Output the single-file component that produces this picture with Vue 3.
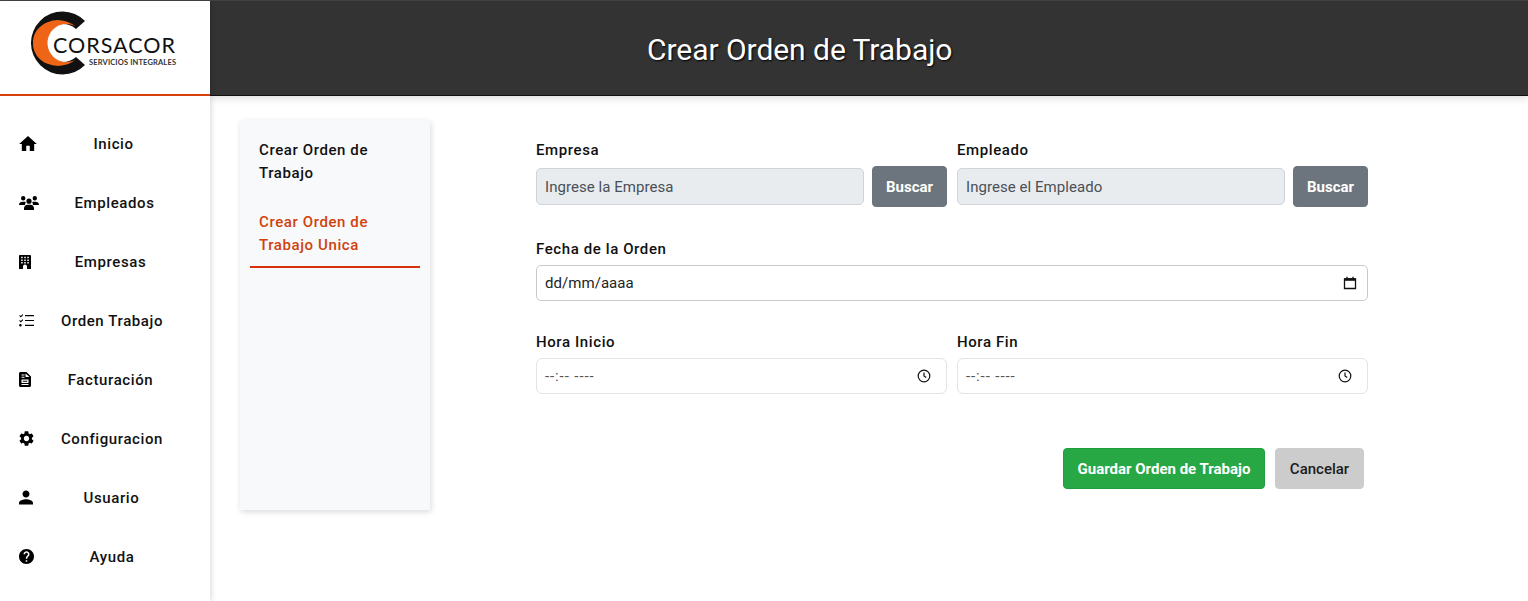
<template>
  <div class="page">
    <aside class="sidebar">
      <div class="brand">
        <svg class="logo" viewBox="0 0 210 95" width="210" height="95">
          <path d="M85 21 A31.500 31.500 0 1 0 85 65 L76 57 A19 19 0 1 1 76 29 Z" fill="#111" />
          <path d="M75 26 A25 22 0 0 0 33 43 A25 22 0 0 0 75 60 A19 19 0 0 1 47.500 43 A19 19 0 0 1 75 26 Z" fill="#ee6518" />
          <text x="53" y="53" class="logo-name" textLength="122">CORSACOR</text>
          <text x="89" y="64.500" class="logo-sub" textLength="87">SERVICIOS INTEGRALES</text>
        </svg>
      </div>
      <nav class="main-nav">
        <a v-for="item in navItems" :key="item.label" class="nav-item">
          <svg class="nav-icon" :width="item.w" :height="item.h" :viewBox="item.box" fill="#000">
            <path :d="item.d" fill-rule="evenodd" />
          </svg>
          <span>{{ item.label }}</span>
        </a>
      </nav>
    </aside>

    <div class="main">
      <header class="topbar">
        <h1>Crear Orden de Trabajo</h1>
      </header>
      <div class="content">
        <div class="subnav">
          <a class="sub-link">Crear Orden de Trabajo</a>
          <a class="sub-link active">Crear Orden de Trabajo Unica</a>
        </div>

        <form class="form" @submit.prevent>
          <div class="row search-row">
            <div class="field">
              <label>Empresa</label>
              <div class="with-btn">
                <input class="ctl disabled" type="text" value="Ingrese la Empresa" readonly />
                <button class="btn-search" type="button">Buscar</button>
              </div>
            </div>
            <div class="field">
              <label>Empleado</label>
              <div class="with-btn">
                <input class="ctl disabled" type="text" value="Ingrese el Empleado" readonly />
                <button class="btn-search" type="button">Buscar</button>
              </div>
            </div>
          </div>

          <div class="field date-field">
            <label>Fecha de la Orden</label>
            <div class="ctl picker strong">
              <span>dd/mm/aaaa</span>
              <svg width="14" height="14" viewBox="0 0 14 14" fill="none" stroke="#111">
                <path d="M1.500 3h11v9.500h-11z" stroke-width="1.300" />
                <path d="M1.500 3.500h11" stroke-width="2.600" />
                <path d="M4 .8v2M10 .8v2" stroke-width="1.300" />
              </svg>
            </div>
          </div>

          <div class="row time-row">
            <div class="field">
              <label>Hora Inicio</label>
              <div class="ctl picker time">
                <span>--:-- ----</span>
                <svg width="14" height="14" viewBox="0 0 14 14" fill="none" stroke="#111" stroke-width="1.200">
                  <circle cx="7" cy="7" r="5.800" />
                  <path d="M7 3.600V7l2.200 1.600" />
                </svg>
              </div>
            </div>
            <div class="field">
              <label>Hora Fin</label>
              <div class="ctl picker time">
                <span>--:-- ----</span>
                <svg width="14" height="14" viewBox="0 0 14 14" fill="none" stroke="#111" stroke-width="1.200">
                  <circle cx="7" cy="7" r="5.800" />
                  <path d="M7 3.600V7l2.200 1.600" />
                </svg>
              </div>
            </div>
          </div>

          <div class="actions">
            <button class="btn-save" type="button">Guardar Orden de Trabajo</button>
            <button class="btn-cancel" type="button">Cancelar</button>
          </div>
        </form>
      </div>
    </div>
  </div>
</template>

<script setup>
const navItems = [
  { label: 'Inicio', w: 18, h: 15, box: '2 3 20 17', d: 'M10 20v-6h4v6h5v-8h3L12 3 2 12h3v8z' },
  {
    label: 'Empleados', w: 20, h: 15, box: '0 0 20 15',
    d: 'M4.200 1a2.200 2.200 0 1 1 0 4.400 2.200 2.200 0 0 1 0-4.400zM15.800 1a2.200 2.200 0 1 1 0 4.400 2.200 2.200 0 0 1 0-4.400zM10 3.600a2.600 2.600 0 1 1 0 5.200 2.600 2.600 0 0 1 0-5.200zM0 10c0-2 1.600-3.200 3.400-3.200h2c.5 0 1 .1 1.400.4C6.200 8 6 8.900 6.100 10zM13.900 10c.1-1.100-.1-2-.7-2.800.4-.3.900-.4 1.400-.4h2c1.800 0 3.400 1.200 3.400 3.200zM5 15v-1.600C5 11.300 6.500 9.700 8.500 9.700h3c2 0 3.500 1.600 3.500 3.700V15z'
  },
  {
    label: 'Empresas', w: 12, h: 14, box: '0 0 12 14',
    d: 'M.8 0h10.400c.4 0 .8.4.8.8V14H8v-2.600a2 2 0 0 0-4 0V14H0V.8C0 .4.400 0 .8 0zM2.200 1.800v1.500h1.500V1.800zm3.050 0v1.500h1.500V1.800zM8.300 1.800v1.500h1.500V1.800zM2.200 4.400v1.500h1.500V4.400zm3.050 0v1.500h1.500V4.400zM8.300 4.400v1.500h1.500V4.400zM2.200 7v1.500h1.500V7zm3.050 0v1.500h1.500V7zM8.300 7v1.500h1.500V7z'
  },
  {
    label: 'Orden Trabajo', w: 15, h: 13, box: '0 0 15 13',
    d: 'M6 1h9v1.200H6zM6 5.900h9v1.200H6zM6 10.800h9V12H6zM.2 1.800l.7-.7.9.9L3.600.2l.7.7L1.800 3.500zM.2 6.800l.7-.7.900.9 1.800-1.800.7.7-2.500 2.600zM1.400 9.900a1.300 1.300 0 1 1 0 2.600 1.300 1.300 0 0 1 0-2.600z'
  },
  {
    label: 'Facturación', w: 12, h: 15, box: '0 0 12 15',
    d: 'M1.500 0H7.500L12 4.500v9c0 .8-.700 1.500-1.500 1.500h-9C.7 15 0 14.300 0 13.500v-12C0 .7.700 0 1.500 0zM2.500 2.500v1h3v-1zM2.500 4.800v1h3v-1zM6.500 1.500v3.500h4zM2.500 7.500v3.500h7V7.500zM3.800 8.700h4.400v1.100H3.800zM2.500 12v1h7v-1z'
  },
  {
    label: 'Configuracion', w: 15, h: 15, box: '2.500 2 19 20',
    d: 'M19.140 12.940c.04-.3.06-.61.06-.94 0-.32-.02-.64-.07-.94l2.030-1.580c.18-.14.23-.41.12-.61l-1.920-3.320c-.12-.22-.37-.29-.59-.22l-2.390.96c-.5-.38-1.030-.7-1.620-.94l-.36-2.540c-.04-.24-.24-.41-.48-.41h-3.840c-.24 0-.43.17-.47.41l-.36 2.540c-.59.24-1.130.57-1.620.94l-2.390-.96c-.22-.08-.47 0-.59.22L2.740 8.870c-.12.21-.08.47.12.61l2.030 1.580c-.05.3-.09.63-.09.94s.02.64.07.94l-2.030 1.580c-.18.14-.23.41-.12.61l1.920 3.320c.12.22.37.29.59.22l2.390-.96c.5.38 1.030.7 1.620.94l.36 2.540c.05.24.24.41.48.41h3.840c.24 0 .44-.17.47-.41l.36-2.540c.59-.24 1.130-.56 1.620-.94l2.390.96c.22.08.47 0 .59-.22l1.920-3.320c.12-.22.07-.47-.12-.61l-2.010-1.580zM12 15.600c-1.980 0-3.600-1.620-3.600-3.600s1.620-3.600 3.600-3.600 3.600 1.620 3.600 3.600-1.620 3.600-3.600 3.600z'
  },
  {
    label: 'Usuario', w: 14, h: 15, box: '4 4 16 16',
    d: 'M12 12c2.210 0 4-1.790 4-4s-1.790-4-4-4-4 1.790-4 4 1.790 4 4 4zm0 2c-2.670 0-8 1.340-8 4v2h16v-2c0-2.660-5.330-4-8-4z'
  },
  {
    label: 'Ayuda', w: 15, h: 15, box: '2 2 20 20',
    d: 'M12 2C6.480 2 2 6.480 2 12s4.480 10 10 10 10-4.480 10-10S17.520 2 12 2zm1 17h-2v-2h2v2zm2.070-7.750l-.9.920C13.450 12.900 13 13.500 13 15h-2v-.5c0-1.100.45-2.100 1.170-2.830l1.240-1.260c.37-.36.59-.86.59-1.410 0-1.100-.9-2-2-2s-2 .9-2 2H8c0-2.210 1.790-4 4-4s4 1.790 4 4c0 .88-.36 1.680-.93 2.250z'
  },
]
</script>

<style>
html, body {
  margin: 0;
  background: #fff;
  overflow: hidden;
}
</style>

<style scoped>
.page {
  display: flex;
  height: 601px;
  font-family: Roboto, "Liberation Sans", sans-serif;
  color: #111;
  border-top: 1px solid #444;
  box-sizing: border-box;
}

.sidebar {
  width: 210px;
  flex: none;
  box-shadow: 2px 0 5px rgba(0, 0, 0, 0.12);
  z-index: 2;
  background: #fff;
}

.brand {
  height: 94px;
  border-bottom: 2px solid #d9400e;
}

.logo {
  display: block;
  margin-top: -1px;
}

.logo-name {
  font: 400 21.500px Lato, sans-serif;
  fill: #111;
}

.logo-sub {
  font: 700 7.500px Lato, sans-serif;
  fill: #333;
}

.main-nav {
  display: flex;
  flex-direction: column;
  padding: 18px 20px 0 19px;
}

.nav-item {
  height: 59px;
  display: flex;
  align-items: center;
  font-size: 15px;
  font-weight: 500;
  letter-spacing: 0.6px;
  color: #111;
}

.nav-item span {
  flex: 1;
  text-align: center;
}

.nav-icon {
  flex: none;
}

.main {
  flex: 1;
  min-width: 0;
  display: flex;
  flex-direction: column;
}

.topbar {
  height: 95px;
  flex: none;
  box-sizing: border-box;
  background: #333;
  border-bottom: 1px solid #111;
  box-shadow: 0 2px 8px rgba(0, 0, 0, 0.15);
  padding: 2px 0 0 437px;
  display: flex;
  align-items: center;
}

.topbar h1 {
  margin: 0;
  font-size: 30px;
  font-weight: 400;
  letter-spacing: -0.05px;
  color: #fff;
  text-shadow: 1px 1px 2px #000;
}

.content {
  display: flex;
  align-items: flex-start;
  padding: 24px 0 0 30px;
}

.subnav {
  width: 190px;
  height: 390px;
  flex: none;
  box-sizing: border-box;
  background: #f8f9fa;
  box-shadow: 1px 2px 6px rgba(0, 0, 0, 0.15);
  padding: 19px 10px;
  display: flex;
  flex-direction: column;
  gap: 26px;
}

.sub-link {
  padding: 0 9px 9px;
  font-size: 15px;
  font-weight: 500;
  line-height: 23px;
  letter-spacing: 0.6px;
  color: #111;
}

.sub-link:first-child {
  padding-bottom: 0;
}

.sub-link.active {
  color: #d0420c;
  border-bottom: 2px solid #d9300c;
}

.form {
  width: 832px;
  margin: 21px 0 0 106px;
}

.row {
  display: grid;
  grid-template-columns: 1fr 1fr;
  gap: 10px;
}

.field label {
  display: block;
  font-size: 15px;
  font-weight: 500;
  line-height: 18px;
  letter-spacing: 0.6px;
  color: #111;
}

.search-row label {
  margin-bottom: 7px;
}

.with-btn {
  display: flex;
  align-items: center;
  gap: 8px;
  height: 41px;
}

.ctl {
  box-sizing: border-box;
  font: 400 15px Roboto, sans-serif;
  letter-spacing: 0.05px;
  color: #212529;
  border-radius: 5px;
  padding: 0 8px;
  outline: none;
}

.disabled {
  flex: 1;
  min-width: 0;
  height: 37px;
  background: #e9ecef;
  border: 1px solid #ced4da;
  color: #495057;
}

.btn-search {
  width: 75px;
  height: 41px;
  flex: none;
  border: 1px solid #6c757d;
  border-radius: 4px;
  background: #6c757d;
  color: #fff;
  font: 700 15px Roboto, sans-serif;
}

.date-field {
  margin-top: 33px;
}

.date-field label {
  margin-bottom: 7px;
}

.picker {
  display: flex;
  align-items: center;
  justify-content: space-between;
  height: 36px;
  background: #fff;
}

.picker.strong {
  border: 1px solid #c9c9c9;
  padding-right: 10px;
}

.picker.time {
  border: 1px solid #e3e3e8;
  border-radius: 6px;
  padding-right: 15px;
  color: #555;
  letter-spacing: 0.9px;
}

.time-row {
  margin-top: 32px;
}

.time-row label {
  margin-bottom: 7px;
}

.actions {
  display: flex;
  justify-content: flex-end;
  gap: 10px;
  margin-top: 54px;
  padding-right: 4px;
}

.btn-save,
.btn-cancel {
  height: 41px;
  border-radius: 4px;
  font-size: 15px;
  font-family: Roboto, sans-serif;
}

.btn-save {
  width: 202px;
  border: 1px solid #1e9e3c;
  background: #28a745;
  color: #fff;
  font-weight: 700;
}

.btn-cancel {
  width: 89px;
  border: 1px solid #ccc;
  background: #ccc;
  color: #1c1c1c;
  font-weight: 500;
}
</style>
